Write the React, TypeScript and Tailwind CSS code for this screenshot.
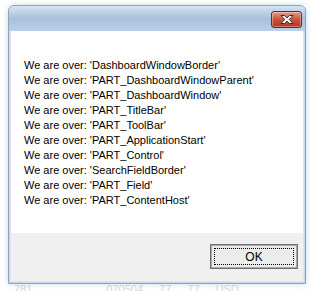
import React from "react";

const lines = [
  "DashboardWindowBorder",
  "PART_DashboardWindowParent",
  "PART_DashboardWindow",
  "PART_TitleBar",
  "PART_ToolBar",
  "PART_ApplicationStart",
  "PART_Control",
  "SearchFieldBorder",
  "PART_Field",
  "PART_ContentHost",
];

const CloseGlyph = () => (
  <svg width="14" height="9" viewBox="0 0 14 9">
    <path
      d="M1 0.5h3.5l2.5 2.3 2.5-2.3H13L9.3 4.5 13 8.5H9.5L7 6.2 4.5 8.5H1l3.7-4z"
      fill="#ffffff"
      stroke="#3a2a28"
      strokeWidth="1"
      strokeLinejoin="round"
    />
  </svg>
);

export default function App() {
  return (
    <div
      className="relative w-[314px] h-[291px] overflow-hidden bg-white"
      style={{ fontFamily: '"Liberation Sans", Arial, sans-serif' }}
    >
      <div className="absolute left-[14px] top-[283px] flex gap-[74px] text-[11px] leading-[12px] text-[#dadada]">
        <span>781</span>
        <div className="flex gap-[16px]">
          <span>070504</span>
          <span>77</span>
          <span>77</span>
          <span>USD</span>
        </div>
      </div>

      <div className="relative ml-[8px] mt-[5px] w-[298px] h-[279px] rounded-t-[6px] border border-[#8fa3ba] bg-[#c7d8ea] shadow-[0_0_6px_rgba(120,140,170,0.35)] flex flex-col">
        <div className="h-[25px] rounded-t-[5px] bg-gradient-to-b from-[#d6e3f1] via-[#aac1db] to-[#b8cfe8] flex items-start justify-end pr-[3px] pt-[5px]">
          <div className="w-[31px] h-[17px] rounded-[3px] border border-[#5e2f27] bg-gradient-to-b from-[#e39b8b] via-[#c9533c] to-[#b3361f] flex items-center justify-center shadow-[inset_0_0_0_1px_rgba(255,255,255,0.35)]">
            <CloseGlyph />
          </div>
        </div>
        <div className="flex-1 mx-[1px] mb-[1px] border-x border-b border-[#dbe6f2] flex flex-col">
          <div className="h-[202px] bg-white pl-[13px] pt-[27px] text-[11px] leading-[15px] text-black">
            {lines.map((l) => (
              <div key={l}>We are over: '{l}'</div>
            ))}
          </div>
          <div className="flex-1 bg-[#f0f0f0] flex justify-end items-start pt-[11px] pr-[5px]">
            <button className="w-[88px] h-[25px] border border-[#707070] bg-[#ececec] shadow-[inset_0_0_0_1px_#a9a9a9] flex items-center justify-center p-[3px]">
              <span className="w-full h-full border border-dotted border-black flex items-center justify-center text-[12px] text-black leading-none">
                OK
              </span>
            </button>
          </div>
        </div>
      </div>
    </div>
  );
}
